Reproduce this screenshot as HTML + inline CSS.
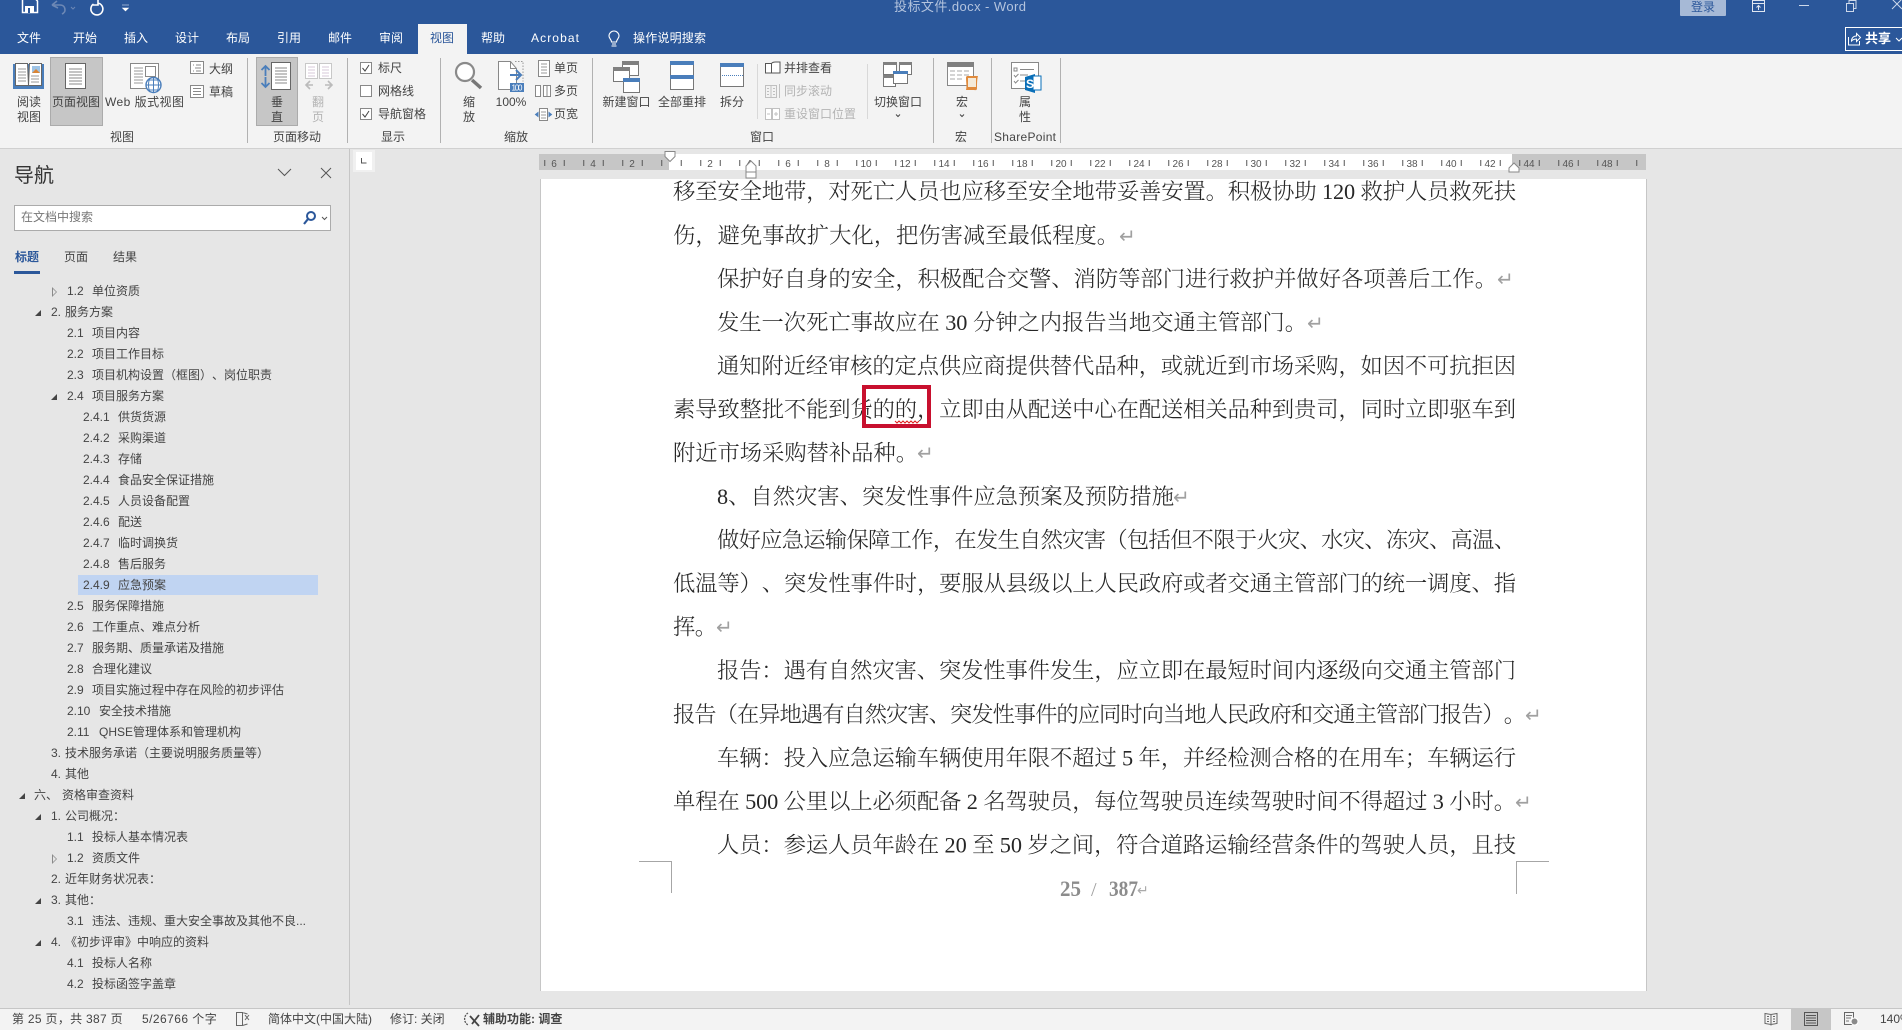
<!DOCTYPE html>
<html lang="zh-CN">
<head>
<meta charset="utf-8">
<title>投标文件.docx - Word</title>
<style>
html,body{margin:0;padding:0;width:1902px;height:1030px;overflow:hidden;background:#e6e6e6}
body{position:relative;font-family:"Liberation Sans","Noto Sans CJK SC",sans-serif;font-size:12px;color:#444;text-spacing-trim:space-all}
svg{position:absolute;left:0;top:0}
svg text{font-family:"Liberation Sans","Noto Sans CJK SC",sans-serif;font-size:12px;fill:#444}
svg .m{text-anchor:middle}
svg .w{fill:#fff}
svg .d{fill:#b4b4b4}
svg .t{font-size:10px;fill:#555;text-anchor:middle}
svg .s{font-family:"Liberation Serif","Noto Serif CJK SC",serif;font-size:22.3px;font-weight:300;fill:#262626}
svg .r{font-family:"DejaVu Sans",sans-serif;font-size:20px;fill:#a0a0a0}
.r0{position:absolute;height:21px;line-height:21px;white-space:pre;color:#444;font-size:12px}
.n{position:absolute;left:0;width:349px;top:0;height:1008px}
.ar{position:absolute;width:0;height:0}
.f{border-bottom:6px solid #444;border-left:6px solid transparent}
.o{border-top:5px solid transparent;border-bottom:5px solid transparent;border-left:5px solid #8a8a8a}
.o:after{content:"";position:absolute;left:-4px;top:-3px;border-top:3px solid transparent;border-bottom:3px solid transparent;border-left:3px solid #e6e6e6}
.st{position:absolute;top:1008px;height:22px;line-height:22px;white-space:pre;color:#444}
</style>
</head>
<body>

<!-- nav panel -->
<div class="n">
<div style="position:absolute;left:14px;top:162px;font-size:20px;line-height:28px;color:#333">导航</div>
<div style="position:absolute;left:14px;top:205px;width:315px;height:24px;background:#fff;border:1px solid #ababab"></div>
<div style="position:absolute;left:21px;top:205px;line-height:24px;color:#777">在文档中搜索</div>
<div style="position:absolute;left:15px;top:247px;line-height:20px;color:#2b579a;font-weight:700">标题</div>
<div style="position:absolute;left:64px;top:247px;line-height:20px">页面</div>
<div style="position:absolute;left:113px;top:247px;line-height:20px">结果</div>
<div style="position:absolute;left:14px;top:271px;width:26px;height:3px;background:#2b579a"></div>
<div style="position:absolute;left:78px;top:575px;width:240px;height:20px;background:#c0d4f2"></div>

<div style="position:absolute;left:0;top:2px;width:349px;height:1000px">
<div class="ar o" style="left:52px;top:285px"></div>
<div class="ar f" style="left:35px;top:308px"></div>
<div class="ar f" style="left:51px;top:392px"></div>
<div class="ar f" style="left:19px;top:791px"></div>
<div class="ar f" style="left:35px;top:812px"></div>
<div class="ar o" style="left:52px;top:852px"></div>
<div class="ar f" style="left:35px;top:896px"></div>
<div class="ar f" style="left:35px;top:938px"></div>

<div class="r0" style="left:67px;top:279px">1.2</div><div class="r0" style="left:92px;top:279px">单位资质</div>
<div class="r0" style="left:51px;top:300px">2.</div><div class="r0" style="left:65px;top:300px">服务方案</div>
<div class="r0" style="left:67px;top:321px">2.1</div><div class="r0" style="left:92px;top:321px">项目内容</div>
<div class="r0" style="left:67px;top:342px">2.2</div><div class="r0" style="left:92px;top:342px">项目工作目标</div>
<div class="r0" style="left:67px;top:363px">2.3</div><div class="r0" style="left:92px;top:363px">项目机构设置（框图）、岗位职责</div>
<div class="r0" style="left:67px;top:384px">2.4</div><div class="r0" style="left:92px;top:384px">项目服务方案</div>
<div class="r0" style="left:83px;top:405px">2.4.1</div><div class="r0" style="left:118px;top:405px">供货货源</div>
<div class="r0" style="left:83px;top:426px">2.4.2</div><div class="r0" style="left:118px;top:426px">采购渠道</div>
<div class="r0" style="left:83px;top:447px">2.4.3</div><div class="r0" style="left:118px;top:447px">存储</div>
<div class="r0" style="left:83px;top:468px">2.4.4</div><div class="r0" style="left:118px;top:468px">食品安全保证措施</div>
<div class="r0" style="left:83px;top:489px">2.4.5</div><div class="r0" style="left:118px;top:489px">人员设备配置</div>
<div class="r0" style="left:83px;top:510px">2.4.6</div><div class="r0" style="left:118px;top:510px">配送</div>
<div class="r0" style="left:83px;top:531px">2.4.7</div><div class="r0" style="left:118px;top:531px">临时调换货</div>
<div class="r0" style="left:83px;top:552px">2.4.8</div><div class="r0" style="left:118px;top:552px">售后服务</div>
<div class="r0" style="left:83px;top:573px">2.4.9</div><div class="r0" style="left:118px;top:573px">应急预案</div>
<div class="r0" style="left:67px;top:594px">2.5</div><div class="r0" style="left:92px;top:594px">服务保障措施</div>
<div class="r0" style="left:67px;top:615px">2.6</div><div class="r0" style="left:92px;top:615px">工作重点、难点分析</div>
<div class="r0" style="left:67px;top:636px">2.7</div><div class="r0" style="left:92px;top:636px">服务期、质量承诺及措施</div>
<div class="r0" style="left:67px;top:657px">2.8</div><div class="r0" style="left:92px;top:657px">合理化建议</div>
<div class="r0" style="left:67px;top:678px">2.9</div><div class="r0" style="left:92px;top:678px">项目实施过程中存在风险的初步评估</div>
<div class="r0" style="left:67px;top:699px">2.10</div><div class="r0" style="left:99px;top:699px">安全技术措施</div>
<div class="r0" style="left:67px;top:720px">2.11</div><div class="r0" style="left:99px;top:720px">QHSE管理体系和管理机构</div>
<div class="r0" style="left:51px;top:741px">3.</div><div class="r0" style="left:65px;top:741px">技术服务承诺（主要说明服务质量等）</div>
<div class="r0" style="left:51px;top:762px">4.</div><div class="r0" style="left:65px;top:762px">其他</div>
<div class="r0" style="left:34px;top:783px">六、</div><div class="r0" style="left:62px;top:783px">资格审查资料</div>
<div class="r0" style="left:51px;top:804px">1.</div><div class="r0" style="left:65px;top:804px">公司概况：</div>
<div class="r0" style="left:67px;top:825px">1.1</div><div class="r0" style="left:92px;top:825px">投标人基本情况表</div>
<div class="r0" style="left:67px;top:846px">1.2</div><div class="r0" style="left:92px;top:846px">资质文件</div>
<div class="r0" style="left:51px;top:867px">2.</div><div class="r0" style="left:65px;top:867px">近年财务状况表：</div>
<div class="r0" style="left:51px;top:888px">3.</div><div class="r0" style="left:65px;top:888px">其他：</div>
<div class="r0" style="left:67px;top:909px">3.1</div><div class="r0" style="left:92px;top:909px">违法、违规、重大安全事故及其他不良...</div>
<div class="r0" style="left:51px;top:930px">4.</div><div class="r0" style="left:65px;top:930px">《初步评审》中响应的资料</div>
<div class="r0" style="left:67px;top:951px">4.1</div><div class="r0" style="left:92px;top:951px">投标人名称</div>
<div class="r0" style="left:67px;top:972px">4.2</div><div class="r0" style="left:92px;top:972px">投标函签字盖章</div>
</div>
</div>

<!-- status bar -->
<div style="position:absolute;left:0;top:1008px;width:1902px;height:22px;background:#f3f3f3;border-top:1px solid #c6c6c6;box-sizing:border-box"></div>
<div style="position:absolute;left:1791px;top:1009px;width:40px;height:21px;background:#c6c6c6"></div>
<div class="st" style="left:12px;letter-spacing:.3px">第 25 页，共 387 页</div>
<div class="st" style="left:142px;letter-spacing:.45px">5/26766 个字</div>
<div class="st" style="left:268px">简体中文(中国大陆)</div>
<div class="st" style="left:390px">修订: 关闭</div>
<div class="st" style="left:483px;font-weight:700">辅助功能: 调查</div>
<div class="st" style="left:1880px">140%</div>

<svg width="1902" height="1030" viewBox="0 0 1902 1030">
<defs>
<pattern id="tk" patternUnits="userSpaceOnUse" x="544.25" y="160" width="19.5" height="6"><rect x="0" y="0" width="1" height="6" fill="#555"/></pattern>
</defs>

<!-- title + tabs -->
<rect x="0" y="0" width="1902" height="54" fill="#2b579a"/>
<rect x="0" y="54" width="1902" height="94" fill="#f3f3f3"/>
<rect x="0" y="148" width="1902" height="1" fill="#d0d0d0"/>
<rect x="418" y="24" width="49" height="30" fill="#f3f3f3"/>

<!-- QAT -->
<path d="M22.500-2h12l3 3v11.500h-15z" fill="none" stroke="#fff" stroke-width="1.500"/>
<rect x="25" y="6" width="9" height="7" fill="#fff"/><rect x="28" y="8" width="2" height="5" fill="#2b579a"/>
<path d="M52 5l5-4M52 5l6 3M52 5h8c4 0 5 3 5 5s-1 3-3 4" fill="none" stroke="#6d88b5" stroke-width="1.600"/>
<path d="M71 7l2 2 2-2" fill="none" stroke="#6d88b5"/>
<path d="M92.500 3a6 6 0 1 0 4-1M97 -1v5h-5" fill="none" stroke="#fff" stroke-width="1.600" transform="translate(1,1)"/>
<path d="M122 5h7M122.500 8l3 3 3-3z" stroke="#fff" fill="#fff" stroke-width=".6"/>
<text x="960" y="11" class="m" style="fill:#b4c4de;font-size:13px" textLength="132">投标文件.docx  -  Word</text>

<!-- window controls -->
<rect x="1680" y="-2" width="46" height="18" rx="1" fill="#a6b9d6"/>
<text x="1703" y="11" class="m" style="fill:#2b579a;font-size:12px">登录</text>
<path d="M1752.500 .5h12v11h-12zM1752.500 3.500h12M1758.500 10V5.500M1756.500 7.500l2-2 2 2" fill="none" stroke="#dfe6f1"/>
<path d="M1799 5.500h10" stroke="#cdd8ea"/>
<path d="M1846.500 3.500h7v8h-7zM1849 3V.5h7v8h-2" fill="none" stroke="#cdd8ea"/>
<path d="M1892 -1l10 10M1902 -1l-10 10" stroke="#cdd8ea" fill="none"/>

<rect x="1845.500" y="27.500" width="60" height="23" fill="none" stroke="#fff"/>
<path d="M1848.500 37v8h11v-4M1851.500 41c0-3 2-5 5-5v-2.500l4 4-4 4v-2.500c-2 0-4 1-5 2z" fill="none" stroke="#fff"/>
<text x="1865" y="43" class="w" style="font-weight:700;font-size:13px">共享</text>
<path d="M1896 38l3 3 3-3" fill="none" stroke="#fff"/>

<!-- tabs text -->
<text x="29" y="42" class="m w">文件</text><text x="85" y="42" class="m w">开始</text>
<text x="136" y="42" class="m w">插入</text><text x="187" y="42" class="m w">设计</text>
<text x="238" y="42" class="m w">布局</text><text x="289" y="42" class="m w">引用</text>
<text x="340" y="42" class="m w">邮件</text><text x="391" y="42" class="m w">审阅</text>
<text x="442" y="42" class="m" style="fill:#2b579a">视图</text><text x="493" y="42" class="m w">帮助</text>
<text x="531" y="42" class="w" textLength="48">Acrobat</text>
<path d="M612 44h4M611.500 46h5M611.500 42c0-2.500-2.500-3.500-2.500-6a5 5 0 0 1 10 0c0 2.500-2.500 3.500-2.500 6z" fill="none" stroke="#fff" stroke-width="1.100"/>
<text x="633" y="42" class="w" textLength="73">操作说明搜索</text>

<!-- group highlight -->
<rect x="50.500" y="57.500" width="52" height="68" fill="#c6c6c6" stroke="#ababab"/>
<rect x="256.500" y="57.500" width="41" height="68" fill="#c6c6c6" stroke="#ababab"/>

<!-- separators -->
<path d="M247.500 58v85M347.500 58v85M440.500 58v85M592.500 58v85M933.500 58v85M991.500 58v85M1060.500 58v85" stroke="#b1b1b1"/>
<path d="M757.500 64v55M867.500 64v55" stroke="#d8d8d8"/>

<!-- reading view -->
<path d="M13 64h31v25H13z" fill="#4a7ebb"/>
<path d="M15.500 63.500h12l1 22h-13zM41.500 63.500h-12l-1 22h13z" fill="#fff" stroke="#666"/>
<path d="M18 69h8M18 72h8M18 75h8M18 78h8M18 81h8M31 76h8M31 79h8M31 82h8" stroke="#999"/>
<rect x="32" y="66" width="8" height="7" fill="#9dc3e6"/><path d="M32 73l4-4 4 4z" fill="#d98536"/>
<text x="29" y="106" class="m">阅读</text><text x="29" y="121" class="m">视图</text>

<!-- print layout -->
<rect x="65.500" y="63.500" width="20" height="25" fill="#fff" stroke="#666"/>
<path d="M69 69h13M69 72h13M69 75h13M69 78h13M69 81h13M69 84h13" stroke="#888"/>
<text x="76" y="106" class="m">页面视图</text>

<!-- web -->
<rect x="130.500" y="63.500" width="28" height="25" fill="#fff" stroke="#888"/>
<path d="M134 68h9M134 71h9M134 74h9M134 77h9M134 80h9M134 83h9" stroke="#999"/>
<rect x="145.500" y="66.500" width="10" height="10" fill="#fff" stroke="#888"/>
<circle cx="153.500" cy="85" r="7.500" fill="#fff" stroke="#4a7ebb" stroke-width="1.400"/>
<path d="M146 85h15M153.500 77.500v15M148 80h11M148 90h11M150 78c-2 4-2 10 0 14M157 78c2 4 2 10 0 14" fill="none" stroke="#4a7ebb"/>
<text x="105" y="106" textLength="79">Web 版式视图</text>

<!-- outline / draft -->
<rect x="190.500" y="61.500" width="13" height="12" fill="#fff" stroke="#888"/>
<path d="M193 65h1M196 65h5M195 68h6M193 71h1M196 71h5" stroke="#888"/>
<rect x="190.500" y="85.500" width="13" height="12" fill="#fff" stroke="#888"/>
<path d="M193 88.500h8M193 91.500h8M193 94.500h8" stroke="#888"/>
<text x="209" y="73">大纲</text><text x="209" y="96">草稿</text>
<text x="122" y="141" class="m">视图</text>

<!-- vertical -->
<rect x="271.500" y="62.500" width="19" height="27" fill="#fff" stroke="#666"/>
<path d="M275 68h12M275 71h12M275 74h12M275 77h12M275 80h12M275 83h12" stroke="#888"/>
<path d="M265.500 66v10M265.500 77v10M261.500 70l4-4 4 4M261.500 83l4 4 4-4" fill="none" stroke="#4a7ebb" stroke-width="1.800"/>
<text x="277" y="106" class="m">垂</text><text x="277" y="121" class="m">直</text>

<!-- side to side -->
<path d="M305.500 63.500h12v15h-12zM319.500 63.500h12v15h-12z" fill="#fff" stroke="#c8c8c8"/>
<path d="M308 67h7M308 70h7M308 73h7M308 76h7M322 67h7M322 70h7M322 73h7M322 76h7" stroke="#d7c8d8"/>
<path d="M306 85h7M325 85h7M310 81l-4 4 4 4M328 81l4 4-4 4" fill="none" stroke="#bbb" stroke-width="1.600"/>
<text x="318" y="106" class="m d">翻</text><text x="318" y="121" class="m d">页</text>
<text x="297" y="141" class="m">页面移动</text>

<!-- show -->
<rect x="360.500" y="62.500" width="11" height="11" fill="#fff" stroke="#888"/>
<path d="M362.500 68l2.500 3 4-6" fill="none" stroke="#444"/>
<rect x="360.500" y="85.500" width="11" height="11" fill="#fff" stroke="#888"/>
<rect x="360.500" y="108.500" width="11" height="11" fill="#fff" stroke="#888"/>
<path d="M362.500 114l2.500 3 4-6" fill="none" stroke="#444"/>
<text x="378" y="72">标尺</text><text x="378" y="95">网格线</text><text x="378" y="118">导航窗格</text>
<text x="393" y="141" class="m">显示</text>

<!-- zoom -->
<path d="M472 80l9 8" stroke="#777" stroke-width="3.500"/>
<circle cx="465" cy="72" r="9" fill="#fff" stroke="#8a8a8a" stroke-width="2.200"/>
<text x="469" y="106" class="m">缩</text><text x="469" y="121" class="m">放</text>

<path d="M498.500 61.500h12l6 7v21h-18z" fill="#fff" stroke="#888"/>
<path d="M510.500 61.500v7h6" fill="none" stroke="#888"/>
<path d="M515 61.500h8v20" fill="none" stroke="#999" stroke-dasharray="1.500 1.500"/>
<path d="M510 75h11M516 70l5 5-5 5" fill="none" stroke="#4a7ebb" stroke-width="2"/>
<rect x="510" y="83" width="14" height="9" fill="#4a7ebb"/>
<text x="517" y="90.500" class="m w" style="font-size:8px" textLength="11">100</text>
<text x="511" y="106" class="m">100%</text>

<rect x="538.500" y="60.500" width="11" height="16" fill="#fff" stroke="#888"/>
<path d="M541 64h6M541 67h6M541 70h6M541 73h6" stroke="#999"/>
<path d="M535.500 85.500h5v11h-5zM543.500 85.500h3.500v11h-3.500zM547 85.500h3.500v11h-3.500z" fill="#fff" stroke="#888"/>
<rect x="539.500" y="108.500" width="8" height="12" fill="#fff" stroke="#888"/>
<path d="M541 112h5M541 115h5M541 118h5" stroke="#999"/>
<path d="M538 112.500v4l-2.500-2zM549 112.500v4l2.500-2z" fill="#4a7ebb" stroke="#4a7ebb"/>
<text x="554" y="72">单页</text><text x="554" y="95">多页</text><text x="554" y="118">页宽</text>
<text x="516" y="141" class="m">缩放</text>

<!-- new window -->
<rect x="622.500" y="61.500" width="16" height="14" fill="#fff" stroke="#777"/><rect x="622" y="61" width="17" height="4" fill="#808080"/>
<rect x="613.500" y="67.500" width="16" height="14" fill="#fff" stroke="#777"/><rect x="613" y="67" width="17" height="4" fill="#808080"/>
<rect x="623.500" y="78.500" width="16" height="14" fill="#fff" stroke="#777"/><rect x="623" y="78" width="17" height="4" fill="#4a7ebb"/>
<text x="626.500" y="106" class="m">新建窗口</text>

<!-- arrange all -->
<rect x="670.500" y="61.500" width="23" height="28" fill="#fff" stroke="#777"/>
<rect x="670" y="61" width="24" height="4" fill="#4a7ebb"/><rect x="670" y="75" width="24" height="4" fill="#4a7ebb"/>
<text x="682" y="106" class="m">全部重排</text>

<!-- split -->
<rect x="720.500" y="63.500" width="23" height="23" fill="#fff" stroke="#777"/>
<rect x="720" y="63" width="24" height="4" fill="#4a7ebb"/>
<path d="M722 75.500h21" stroke="#4a7ebb" stroke-dasharray="1 1"/>
<text x="732" y="106" class="m">拆分</text>

<!-- side by side -->
<path d="M765.500 63.500l6 0 0 9.500-6 0zM771.500 63.500c1-1.500 3-1.500 4-1.500h4.500v11h-8.500z" fill="#fff" stroke="#555"/>
<text x="784" y="72">并排查看</text>
<path d="M765.500 85.500h11v12h-11zM771 85.500v12M767 88.500h2M767 91.500h2M767 94.500h2M773 88.500h2M773 91.500h2M773 94.500h2" fill="none" stroke="#c0c0c0"/>
<path d="M779.500 84v14" stroke="#c0c0c0"/>
<text x="784" y="95" class="d">同步滚动</text>
<path d="M765.500 108.500h6v11h-6zM772.500 108.500h7v11h-7zM767 114h3M774 114h4M776 112v4" fill="#fff" stroke="#c0c0c0"/>
<text x="784" y="118" class="d">重设窗口位置</text>

<!-- switch -->
<path d="M883.500 62.500h13v12h-13zM899.500 62.500h12v12h-12zM883.500 75.500h12v11h-12z" fill="#fff" stroke="#777"/>
<path d="M883 62h14v3h-14zM899 62h13v3h-13zM883 75h13v3h-13z" fill="#808080"/>
<rect x="893.500" y="71.500" width="14" height="12" fill="#fff" stroke="#777"/><rect x="893" y="71" width="15" height="3" fill="#4a7ebb"/>
<text x="898" y="106" class="m">切换窗口</text>
<path d="M896 114.500l2 2 2-2" fill="none" stroke="#444"/>
<text x="762" y="141" class="m">窗口</text>

<!-- macro -->
<rect x="947.500" y="62.500" width="26" height="23" fill="#fff" stroke="#888"/>
<rect x="947" y="62" width="27" height="5" fill="#808080"/>
<path d="M950 71h5M957 71h5M964 71h5M950 75h5M957 75h5M964 75h5M950 79h5M957 79h5" stroke="#aaa"/>
<path d="M966 78c0-2 1-2 2-2h10c-1 3-1 9-1 12s-2 2-3 2h-8c1-3 0-8 0-12z" fill="#e08a3c"/>
<path d="M968 78h8v9h-8z" fill="#f4ead9"/>
<text x="962" y="106" class="m">宏</text>
<path d="M960 114.500l2 2 2-2" fill="none" stroke="#444"/>
<text x="961" y="141" class="m">宏</text>

<!-- sharepoint -->
<rect x="1011.500" y="62.500" width="27" height="26" fill="#fff" stroke="#888"/>
<path d="M1014 68h3v3h-3zM1020 69.500h14M1020 75h8M1020 81h6" fill="none" stroke="#888"/>
<path d="M1014 75l1.500 2 3-3M1014 81l1.500 2 3-3" fill="none" stroke="#888"/>
<path d="M1025 77l10-3v19l-10-3z" fill="#0a6fb8"/>
<rect x="1033" y="76" width="8" height="14" fill="#fff" stroke="#0a6fb8"/>
<text x="1026" y="88" class="w" style="font-weight:700;font-size:12px">S</text>
<text x="1025" y="106" class="m">属</text><text x="1025" y="121" class="m">性</text>
<text x="1025" y="141" class="m" textLength="62">SharePoint</text>

<!-- tab selector -->
<rect x="353" y="150" width="22" height="22" fill="#f0f0f0"/>
<rect x="356" y="152" width="16" height="18" fill="#fff"/>
<path d="M361.500 158v5h5" fill="none" stroke="#555"/>

<!-- ruler -->
<rect x="539" y="154" width="130" height="16" fill="#c6c6c6"/>
<rect x="669" y="154" width="843" height="16" fill="#fff"/>
<rect x="1512" y="154" width="134" height="16" fill="#c6c6c6"/>
<rect x="544" y="160" width="1095" height="6" fill="url(#tk)"/>
<text x="554" y="167" class="t">6</text><text x="593" y="167" class="t">4</text><text x="632" y="167" class="t">2</text>
<text x="710" y="167" class="t">2</text><text x="749" y="167" class="t">4</text><text x="788" y="167" class="t">6</text>
<text x="827" y="167" class="t">8</text><text x="866" y="167" class="t">10</text><text x="905" y="167" class="t">12</text>
<text x="944" y="167" class="t">14</text><text x="983" y="167" class="t">16</text><text x="1022" y="167" class="t">18</text>
<text x="1061" y="167" class="t">20</text><text x="1100" y="167" class="t">22</text><text x="1139" y="167" class="t">24</text>
<text x="1178" y="167" class="t">26</text><text x="1217" y="167" class="t">28</text><text x="1256" y="167" class="t">30</text>
<text x="1295" y="167" class="t">32</text><text x="1334" y="167" class="t">34</text><text x="1373" y="167" class="t">36</text>
<text x="1412" y="167" class="t">38</text><text x="1451" y="167" class="t">40</text><text x="1490" y="167" class="t">42</text>
<text x="1529" y="167" class="t">44</text><text x="1568" y="167" class="t">46</text><text x="1607" y="167" class="t">48</text>
<path d="M665 151.500h10v5l-5 5-5-5z" fill="#fff" stroke="#888"/>
<path d="M746 172v-6l5-5 5 5v6zM746 172h10v6h-10z" fill="#fff" stroke="#888"/>
<path d="M1509 172v-4l5-5 5 5v4z" fill="#fff" stroke="#888"/>

<!-- page -->
<rect x="541" y="179" width="1105" height="812" fill="#fff"/>
<path d="M540.500 179v812M1646.500 179v812" stroke="#c6c6c6"/>
<path d="M639 861.500h32.500V893M1549 861.500h-32.500V894" fill="none" stroke="#a6a6a6"/>

<!-- document text -->
<g transform="translate(0,-.8)">
<text class="s" x="673" y="200" textLength="843">移至安全地带，对死亡人员也应移至安全地带妥善安置。积极协助 120 救护人员救死扶</text>
<text class="s" x="673" y="243.600" textLength="446">伤，避免事故扩大化，把伤害减至最低程度。</text><text class="r" x="1119" y="244">↵</text>
<text class="s" x="717" y="287.200" textLength="780">保护好自身的安全，积极配合交警、消防等部门进行救护并做好各项善后工作。</text><text class="r" x="1497" y="287">↵</text>
<text class="s" x="717" y="330.700" textLength="590">发生一次死亡事故应在 30 分钟之内报告当地交通主管部门。</text><text class="r" x="1307" y="331">↵</text>
<text class="s" x="717" y="374.200" textLength="799">通知附近经审核的定点供应商提供替代品种，或就近到市场采购，如因不可抗拒因</text>
<text class="s" x="673" y="417.800" textLength="843">素导致整批不能到货的的，立即由从配送中心在配送相关品种到贵司，同时立即驱车到</text>
<text class="s" x="673" y="461.300" textLength="245">附近市场采购替补品种。</text><text class="r" x="917" y="461">↵</text>
<text class="s" x="717" y="504.900" textLength="457">8、自然灾害、突发性事件应急预案及预防措施</text><text class="r" x="1173" y="505">↵</text>
<text class="s" x="717" y="548.400" textLength="799">做好应急运输保障工作，在发生自然灾害（包括但不限于火灾、水灾、冻灾、高温、</text>
<text class="s" x="673" y="592" textLength="843">低温等）、突发性事件时，要服从县级以上人民政府或者交通主管部门的统一调度、指</text>
<text class="s" x="673" y="635.500" textLength="44">挥。</text><text class="r" x="716" y="635">↵</text>
<text class="s" x="717" y="679" textLength="799">报告：遇有自然灾害、突发性事件发生，应立即在最短时间内逐级向交通主管部门</text>
<text class="s" x="673" y="722.600" textLength="853">报告（在异地遇有自然灾害、突发性事件的应同时向当地人民政府和交通主管部门报告）。</text><text class="r" x="1525" y="723">↵</text>
<text class="s" x="717" y="766.100" textLength="799">车辆：投入应急运输车辆使用年限不超过 5 年，并经检测合格的在用车；车辆运行</text>
<text class="s" x="673" y="809.700" textLength="843">单程在 500 公里以上必须配备 2 名驾驶员，每位驾驶员连续驾驶时间不得超过 3 小时。</text><text class="r" x="1515" y="810">↵</text>
<text class="s" x="717" y="853.200" textLength="799">人员：参运人员年龄在 20 至 50 岁之间，符合道路运输经营条件的驾驶人员，且技</text>
</g>

<!-- footer page number -->
<g style="fill:#8c8c8c">
<text x="1060" y="896" textLength="21" lengthAdjust="spacingAndGlyphs" style="font-family:'Liberation Serif',serif;font-size:22px;font-weight:700;fill:#8c8c8c">25</text>
<text x="1091" y="896" style="font-family:'Liberation Serif',serif;font-size:20px;fill:#a0a0a0">/</text>
<text x="1109" y="896" textLength="29" lengthAdjust="spacingAndGlyphs" style="font-family:'Liberation Serif',serif;font-size:22px;font-weight:700;fill:#8c8c8c">387</text>
</g>
<text x="1137" y="895" style="font-family:'DejaVu Sans',sans-serif;font-size:14px;fill:#aaa">↵</text>

<!-- squiggle + red box -->
<path d="M895 421l2 2 2-2 2 2 2-2 2 2 2-2 2 2 2-2 2 2 2-2 2 2 2-2" fill="none" stroke="#e02020"/>
<rect x="864" y="387" width="65" height="39" fill="none" stroke="#c8102e" stroke-width="4"/>

<!-- nav icons -->
<path d="M278 169l6.500 6.500 6.500-6.500M321 168l10 10M331 168l-10 10" fill="none" stroke="#555"/>
<circle cx="311" cy="216" r="4" fill="#fff" stroke="#2b579a" stroke-width="2"/>
<path d="M308 219l-4 5" stroke="#2b579a" stroke-width="2.200"/>
<path d="M322 217l2.500 2.500 2.500-2.500" fill="none" stroke="#555"/>
<path d="M349.500 149v856" stroke="#c6c6c6"/>

<!-- status icons -->
<path d="M236.500 1012.500h6v13h-6zM242.500 1012.500l5 1.500M242.500 1025.500l5-1.500" fill="none" stroke="#666"/>
<path d="M245 1015l4 5M249 1015l-4 5" stroke="#666" fill="none"/>
<path d="M468 1013a7 7 0 0 0 0 12" fill="none" stroke="#555" stroke-width="1.300" stroke-dasharray="2 1"/>
<path d="M470 1016l9 10M479 1015l-7 9" stroke="#444" stroke-width="1.800" fill="none"/>
<path d="M1765 1013.500l6 1 6-1v10l-6 1-6-1zM1771 1014.500v11M1767 1016.500h2M1767 1019h2M1767 1021.500h2M1773 1016.500h2M1773 1019h2M1773 1021.500h2" fill="none" stroke="#666"/>
<rect x="1804.500" y="1012.500" width="13" height="13" fill="none" stroke="#555"/>
<path d="M1806 1015.500h10M1806 1018h10M1806 1020.500h10M1806 1023h10" stroke="#555"/>
<path d="M1844.500 1012.500h9v12h-9z" fill="none" stroke="#666"/>
<path d="M1846 1015.500h6M1846 1018h5M1846 1021h3" stroke="#777"/>
<circle cx="1854.500" cy="1021.500" r="3.500" fill="#8a8a8a" stroke="#fff"/>
</svg>
</body>
</html>
